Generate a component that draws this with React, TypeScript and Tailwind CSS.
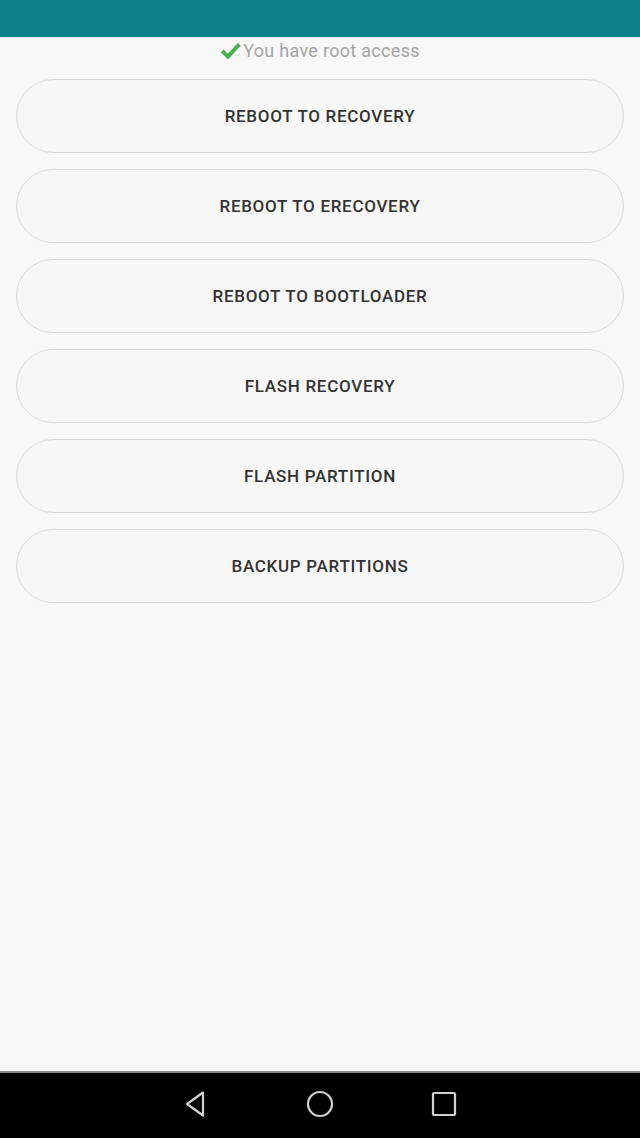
const actions = [
  'Reboot to Recovery',
  'Reboot to eRecovery',
  'Reboot to Bootloader',
  'Flash Recovery',
  'Flash Partition',
  'Backup Partitions',
]

export default function App() {
  return (
    <div className="flex h-[1138px] w-[640px] flex-col bg-[#f8f8f8] font-['Roboto',sans-serif]">
      <div className="h-[37px] bg-[#0b8088]" />
      <main className="flex flex-1 flex-col">
        <div className="flex h-[27px] items-center justify-center text-[18px] tracking-[0.3px] text-[#a4a4a4]">
          <svg viewBox="0 0 24 24" className="mr-[2px] h-[21px] w-[21px]">
            <path d="M2.5 12.5 L9 19 L22 5" fill="none" stroke="#4caf50" strokeWidth="4.5" />
          </svg>
          <span>You have root access</span>
        </div>
        <div className="flex flex-col gap-[16px] px-[16px] pt-[15px]">
          {actions.map(label => (
            <button
              key={label}
              className="h-[74px] w-full rounded-full border border-[#d9d9d9] bg-[#f7f7f7] pt-[1px] text-[17px] font-medium uppercase tracking-[0.7px] text-[#333]"
            >
              {label}
            </button>
          ))}
        </div>
      </main>
      <nav className="flex h-[67px] items-center justify-center gap-[96px] border-t-2 border-[#888] bg-black pb-[3px]">
        <svg viewBox="0 0 28 28" className="h-[28px] w-[28px]">
          <path d="M21 2.5 L5 14 L21 25.5 Z" fill="none" stroke="#d0d0d0" strokeWidth="2.2" strokeLinejoin="round" />
        </svg>
        <svg viewBox="0 0 28 28" className="h-[28px] w-[28px]">
          <circle cx="14" cy="14" r="12" fill="none" stroke="#d0d0d0" strokeWidth="2.2" />
        </svg>
        <svg viewBox="0 0 28 28" className="h-[28px] w-[28px]">
          <rect x="3" y="3" width="22" height="22" rx="1.5" fill="none" stroke="#d0d0d0" strokeWidth="2.2" />
        </svg>
      </nav>
    </div>
  )
}
